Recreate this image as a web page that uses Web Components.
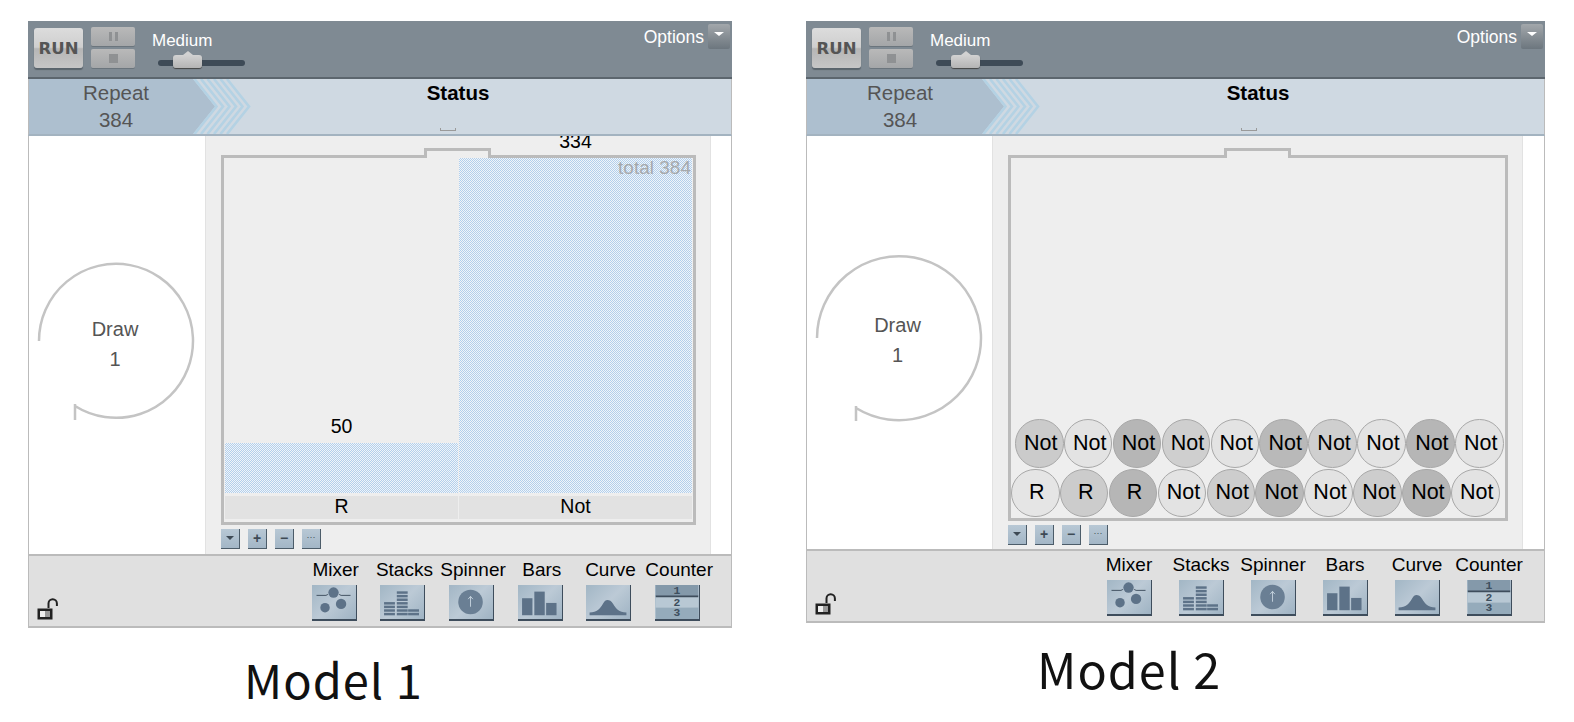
<!doctype html>
<html>
<head>
<meta charset="utf-8">
<title>Sampler models</title>
<style>
  html, body { margin: 0; background: #fff; }
  body { width: 1574px; height: 722px; overflow: hidden; font-family: "Liberation Sans", Arial, sans-serif; }
  .page { display: flex; padding: 21px 0 0 28px; gap: 74px; align-items: flex-start; }
</style>
</head>
<body>
<div class="page">
  <model-figure caption="Model 1" style="--panel-w:704px; --panel-h:607px; --side-w:176px; --canvas-w:506px; --cap-top:27px; --cap-left:216px; --cap-size:47px; --canvas-foot:5px; --label-shift:3px;">
    <sim-toolbar slot="toolbar"></sim-toolbar>
    <repeat-band slot="band" status-at="429px" tick-at="419px" chevron-left="164"></repeat-band>
    <draw-ring slot="side" size="160" cx="80" cy="80" r="77" tailx="39" taily="145" tailend="159" style="--ring-shift:-6px"></draw-ring>
    <sample-frame slot="canvas" tab-left="200px" total="total 384">
      <bar-stack>
        <bar-column count="50" label="R" height="50"></bar-column>
        <bar-column count="334" label="Not" height="335"></bar-column>
      </bar-stack>
    </sample-frame>
    <sample-buttons slot="canvas"></sample-buttons>
    <device-bar slot="devices" style="--cell:68.7px"></device-bar>
  </model-figure>

  <model-figure caption="Model 2" style="--panel-w:739px; --panel-h:602px; --side-w:185px; --canvas-w:531px; --cap-top:21px; --cap-left:231px; --cap-size:48.500px;">
    <sim-toolbar slot="toolbar"></sim-toolbar>
    <repeat-band slot="band" status-at="451px" tick-at="442px" chevron-left="175" repeat-left="43px"></repeat-band>
    <draw-ring slot="side" size="170" cx="85" cy="85" r="82" tailx="42" taily="155" tailend="168" style="--ring-shift:-8px"></draw-ring>
    <sample-frame slot="canvas" tab-left="213px">
      <ball-row style="--row-inset:4px">
        <sample-ball tone="#cbcbcb">Not</sample-ball><sample-ball tone="#e3e3e3">Not</sample-ball><sample-ball tone="#b6b6b6">Not</sample-ball><sample-ball tone="#cfcfcf">Not</sample-ball><sample-ball tone="#e3e3e3">Not</sample-ball><sample-ball tone="#b9b9b9">Not</sample-ball><sample-ball tone="#cfcfcf">Not</sample-ball><sample-ball tone="#e3e3e3">Not</sample-ball><sample-ball tone="#b6b6b6">Not</sample-ball><sample-ball tone="#e3e3e3">Not</sample-ball>
      </ball-row>
      <ball-row>
        <sample-ball tone="#e5e5e5">R</sample-ball><sample-ball tone="#cccccc">R</sample-ball><sample-ball tone="#b6b6b6">R</sample-ball><sample-ball tone="#e3e3e3">Not</sample-ball><sample-ball tone="#cdcdcd">Not</sample-ball><sample-ball tone="#b9b9b9">Not</sample-ball><sample-ball tone="#e3e3e3">Not</sample-ball><sample-ball tone="#cdcdcd">Not</sample-ball><sample-ball tone="#b6b6b6">Not</sample-ball><sample-ball tone="#e3e3e3">Not</sample-ball>
      </ball-row>
    </sample-frame>
    <sample-buttons slot="canvas"></sample-buttons>
    <device-bar slot="devices" style="--cell:72px"></device-bar>
  </model-figure>
</div>

<script>
function defineEl(name, html, extra) {
  const tpl = document.createElement("template");
  tpl.innerHTML = html;
  class El extends HTMLElement {
    constructor() {
      super();
      this.attachShadow({ mode: "open" });
      this.shadowRoot.appendChild(tpl.content.cloneNode(true));
    }
    connectedCallback() {
      if (extra) extra(this, this.shadowRoot);
    }
  }
  customElements.define(name, El);
}

defineEl("model-figure", `
  <style>
    :host { display: block; width: var(--panel-w); }
    .panel { width: var(--panel-w); height: var(--panel-h); display: flex; flex-direction: column; box-sizing: border-box; }
    .main { flex: 1; min-height: 0; display: flex; border-left: 1px solid #bbb; border-right: 1px solid #bbb; background: #fff; }
    .side { width: var(--side-w); display: flex; align-items: center; justify-content: center; }
    .canvas { width: var(--canvas-w); box-sizing: border-box; background: #eee; border-left: 1px solid #e2e2e2; border-right: 1px solid #e2e2e2; padding: 19px 14px var(--canvas-foot, 4px) 15px; display: flex; flex-direction: column; overflow: hidden; }
    .cap { margin: var(--cap-top) 0 0 var(--cap-left); font: 400 var(--cap-size)/1 "Noto Sans CJK KR", "Noto Sans", sans-serif; color: #111; letter-spacing: 1px; white-space: nowrap; }
  </style>
  <div class="panel">
    <slot name="toolbar"></slot>
    <slot name="band"></slot>
    <div class="main">
      <div class="side"><slot name="side"></slot></div>
      <div class="canvas"><slot name="canvas"></slot></div>
    </div>
    <slot name="devices"></slot>
  </div>
  <div class="cap"></div>
`, (el, root) => {
  root.querySelector(".cap").textContent = el.getAttribute("caption");
});

defineEl("sim-toolbar", `
  <style>
    :host { display: flex; height: 58px; flex: none; box-sizing: border-box; background: #7f8a93; border-bottom: 2px solid #5c666e; padding: 7px 2px 0 6px; color: #fff; font-family: "Liberation Sans", Arial, sans-serif; }
    .run { width: 49px; height: 40px; box-sizing: border-box; border-radius: 3px; background: linear-gradient(#dcdcdc 0, #cfcfcf 48%, #b6b6b6 52%, #c6c6c6 100%); box-shadow: 0 2px 1px #5a646c; font: 700 16.500px/41px "DejaVu Sans", sans-serif; color: #555; text-align: center; }
    .pair { margin-left: 8px; display: flex; flex-direction: column; gap: 3px; margin-top: -1px; }
    .pair div { width: 44px; height: 19px; border-radius: 2px; background: linear-gradient(#b9b9b9, #a4a6a8); display: flex; align-items: center; justify-content: center; gap: 3px; box-shadow: 0 1px 0 #6b757d; }
    .pause { width: 3px; height: 9px; background: #8f9193; }
    .stop { width: 9px; height: 9px; background: #8f9193; }
    .speed { margin-left: 17px; width: 120px; display: flex; flex-direction: column; }
    .speed span { font-size: 17px; line-height: 20px; margin-top: 3px; }
    .track { position: relative; margin: 9px 0 0 6px; width: 87px; height: 6px; border-radius: 3px; background: #3e4b57; }
    .thumb { position: absolute; left: 15px; top: -5px; width: 29px; height: 13px; border-radius: 3px; background: linear-gradient(#d2d2d2, #b4b4b4); box-shadow: 0 1px 1px #444; }
    .thumb::before { content: ""; position: absolute; left: 10px; top: -4px; border: 5px solid transparent; border-top: 0; border-bottom: 4px solid #d2d2d2; }
    .opts { margin-left: auto; display: flex; gap: 4px; align-items: flex-start; margin-top: -4px; }
    .opts span { font-size: 17.500px; line-height: 24px; margin-top: 1px; }
    .menu { width: 22px; height: 25px; border-radius: 2px; background: linear-gradient(#a2a7ab, #6c767e); position: relative; }
    .menu::after { content: ""; position: absolute; left: 6px; top: 8px; border: 5px solid transparent; border-bottom: 0; border-top: 4px solid #fff; }
  </style>
  <div class="run">RUN</div>
  <div class="pair">
    <div><i class="pause"></i><i class="pause"></i></div>
    <div><i class="stop"></i></div>
  </div>
  <div class="speed">
    <span>Medium</span>
    <div class="track"><div class="thumb"></div></div>
  </div>
  <div class="opts"><span>Options</span><div class="menu"></div></div>
`);

defineEl("repeat-band", `
  <style>
    :host { display: block; flex: none; height: 57px; box-sizing: border-box; position: relative; background: #cfd9e2; border-bottom: 2px solid #a3b3c0; border-left: 1px solid #bbb; border-right: 1px solid #bbb; font-family: "Liberation Sans", Arial, sans-serif; }
    .chev { position: absolute; left: 0; top: 0; width: 260px; height: 55px; }
    .rep { position: absolute; left: 37px; width: 100px; top: 0; text-align: center; font-size: 20.500px; line-height: 27px; color: #555; }
    .status { position: absolute; top: 0; transform: translateX(-50%); font-size: 20.500px; font-weight: 700; line-height: 27px; color: #000; }
    .tick { position: absolute; bottom: 3px; width: 16px; height: 3px; border: 1px solid #9a9a9a; border-top: 0; box-sizing: border-box; transform: translateX(-50%); }
  </style>
  <svg class="chev" viewBox="0 0 260 55">
    <polygon class="fill" fill="#adbfcf"/>
    <g class="stripes" fill="none" stroke="#b4d2e4" stroke-width="2.600"></g>
  </svg>
  <div class="rep">Repeat<br>384</div>
  <div class="status">Status</div>
  <div class="tick"></div>
`, (el, root) => {
  const shift = parseFloat(el.getAttribute("chevron-left"));
  root.querySelector(".fill").setAttribute("points", `0,0 ${shift},0 ${shift + 22},27.5 ${shift},55 0,55`);
  let lines = "";
  for (let i = 0; i < 6; i++) {
    const x = shift + 1.5 + i * 6.5;
    lines += `<polyline points="${x},0 ${x + 22},27.5 ${x},55"/>`;
  }
  root.querySelector(".stripes").innerHTML = lines;
  if (el.hasAttribute("repeat-left")) {
    root.querySelector(".rep").style.left = el.getAttribute("repeat-left");
  }
  root.querySelector(".status").style.left = el.getAttribute("status-at");
  root.querySelector(".tick").style.left = el.getAttribute("tick-at");
});

defineEl("draw-ring", `
  <style>
    :host { display: block; position: relative; margin-top: var(--ring-shift, 0); margin-left: -2px; font-family: "Liberation Sans", Arial, sans-serif; color: #555; }
    svg { display: block; }
    .txt { position: absolute; inset: 0 2px 0 0; display: flex; flex-direction: column; align-items: center; justify-content: center; font-size: 20px; line-height: 30px; padding-top: 3px; }
  </style>
  <svg><path fill="none" stroke="#c4c4c4" stroke-width="2.500"/></svg>
  <div class="txt"><span>Draw</span><span>1</span></div>
`, (el, root) => {
  const s = +el.getAttribute("size"), cx = +el.getAttribute("cx"), cy = +el.getAttribute("cy"), r = +el.getAttribute("r");
  const tx = +el.getAttribute("tailx"), ty = +el.getAttribute("taily"), te = +el.getAttribute("tailend");
  const svg = root.querySelector("svg");
  svg.setAttribute("width", s);
  svg.setAttribute("height", s + 2);
  root.querySelector("path").setAttribute("d", `M${cx - r} ${cy} A${r} ${r} 0 1 1 ${tx} ${ty} M${tx} ${ty - 2} V${te}`);
});

defineEl("sample-frame", `
  <style>
    :host { display: block; flex: 1; min-height: 0; position: relative; box-sizing: border-box; border: 3px solid #bbb; background: #eee; }
    .inner { height: 100%; display: flex; flex-direction: column; justify-content: flex-end; position: relative; }
    .tab { position: absolute; top: -10px; height: 10px; width: 67px; box-sizing: border-box; border: 3px solid #bbb; border-bottom: 0; background: #eee; }
    .tab::after { content: ""; position: absolute; left: 0; right: 0; bottom: -3px; height: 3px; background: #eee; }
    .total { position: absolute; right: 2px; top: -1px; font-size: 19px; line-height: 22px; color: #a6a9ac; z-index: 1; }
  </style>
  <div class="tab"></div>
  <div class="inner"><slot></slot></div>
  <div class="total"></div>
`, (el, root) => {
  root.querySelector(".tab").style.left = el.getAttribute("tab-left");
  const total = root.querySelector(".total");
  if (el.hasAttribute("total")) total.textContent = el.getAttribute("total");
  else total.remove();
});

defineEl("sample-buttons", `
  <style>
    :host { display: flex; gap: 8px; flex: none; height: 20px; margin-top: 4px; }
    div { width: 19px; height: 20px; box-sizing: border-box; background: linear-gradient(#b8c8d5, #a3b6c6); border-right: 1px solid #4c5c69; border-bottom: 1px solid #4c5c69; color: #3e4a55; font: 700 14px/19px "Liberation Sans", sans-serif; text-align: center; }
    .dn::after { content: ""; display: inline-block; border: 4px solid transparent; border-bottom: 0; border-top: 4px solid #3e4a55; vertical-align: middle; margin-top: -2px; }
    .more { font-size: 9px; line-height: 17px; font-weight: 400; }
  </style>
  <div class="dn"></div><div>+</div><div>&minus;</div><div class="more">&middot;&middot;&middot;</div>
`);

defineEl("bar-stack", `
  <style>
    :host { display: flex; align-items: flex-end; height: 100%; gap: 1px; padding: 0 1px; box-sizing: border-box; }
  </style>
  <slot></slot>
`);

defineEl("bar-column", `
  <style>
    :host { display: flex; flex-direction: column; flex: 1; min-width: 0; text-align: center; font-family: "Liberation Sans", Arial, sans-serif; color: #000; }
    .count { font-size: 19.500px; line-height: 22px; margin-bottom: 6px; }
    .bar { background-image: repeating-conic-gradient(#b3cfeb 0 25%, #f0f5fa 0 50%); background-size: 2px 2px; }
    .lab { margin-top: 3px; height: 23px; margin-bottom: 3px; background: #e2e2e2; font-size: 19.500px; line-height: 21px; }
  </style>
  <div class="count"></div>
  <div class="bar"></div>
  <div class="lab"></div>
`, (el, root) => {
  root.querySelector(".count").textContent = el.getAttribute("count");
  root.querySelector(".lab").textContent = el.getAttribute("label");
  root.querySelector(".bar").style.height = el.getAttribute("height") + "px";
});

defineEl("ball-row", `
  <style>
    :host { display: flex; flex: none; padding-left: var(--row-inset, 0); }
  </style>
  <slot></slot>
`);

defineEl("sample-ball", `
  <style>
    :host { display: block; flex: 0 0 48.900px; height: 49.500px; font-family: "Liberation Sans", Arial, sans-serif; }
    div { width: 48.500px; height: 48.500px; box-sizing: border-box; border-radius: 50%; border: 1.500px solid #a8a8a8; display: flex; align-items: center; justify-content: center; font-size: 21.500px; color: #000; padding-left: 3px; }
  </style>
  <div><slot></slot></div>
`, (el, root) => {
  root.querySelector("div").style.background = el.getAttribute("tone");
});

function stackRows() {
  let s = "";
  [[3.5, 4, 11.5], [17, 7, 11.5], [29, 2, 11.5]].forEach(([x, n, w]) => {
    for (let i = 0; i < n; i++) s += `<rect x="${x}" y="${29.5 - i * 3.8}" width="${w}" height="2.600" fill="#5d7288"/>`;
  });
  return s;
}

const digitAttrs = `x="22.500" font-family="Liberation Mono, monospace" font-size="12" font-weight="700" text-anchor="middle" fill="#3e4f5f"`;
const deviceGlyphs = {
  Mixer: `<path d="M4 11h10l2-1M28 10l2 1h10" stroke="#3e4d5c" stroke-width="1" fill="none"/><circle cx="22" cy="8" r="5.500" fill="#5d7288"/><circle cx="13" cy="24" r="5" fill="#5d7288"/><circle cx="30" cy="20" r="5.500" fill="#5d7288"/>`,
  Stacks: stackRows(),
  Spinner: `<circle cx="22" cy="18" r="13" fill="#6a7f94"/><path d="M22 23V12M19.500 15l2.500-3 2.500 3" stroke="#c4d2dd" stroke-width="1" fill="none"/>`,
  Bars: `<rect x="3.500" y="14" width="11" height="18" fill="#5d7288"/><rect x="16.500" y="7" width="11" height="25" fill="#5d7288"/><rect x="29" y="19" width="11" height="13" fill="#5d7288"/>`,
  Curve: `<path d="M3 32V29C11 29 14 25 17 20C19 17 20 16 22 16C24 16 26 17 28 20C31 25 34 29 42 29V32Z" fill="#5d7288"/>`,
  Counter: `<rect y="0" width="45" height="12" fill="#8499aa"/><rect y="12" width="45" height="12" fill="#b8c8d4"/><rect y="24" width="45" height="12" fill="#95abbb"/><path d="M0 12H45" stroke="#3e4d5c" stroke-width="2"/><text ${digitAttrs} y="10">1</text><text ${digitAttrs} y="22.500">2</text><text ${digitAttrs} y="33">3</text>`
};

defineEl("device-icon", `
  <style>
    :host { display: flex; flex-direction: column; align-items: center; flex: 0 0 var(--cell); min-width: 0; width: var(--cell); font-family: "Liberation Sans", Arial, sans-serif; }
    span { font-size: 19px; line-height: 22px; color: #000; white-space: nowrap; padding-left: var(--label-shift, 0); }
    svg { display: block; width: 45px; height: 36px; margin-top: 4px; box-sizing: border-box; border-right: 1px solid #3e4d5c; border-bottom: 2px solid #3e4d5c; background: linear-gradient(135deg, #a2b6c5, #bccad6 50%, #9fb3c3); }
  </style>
  <span></span>
  <svg viewBox="0 0 45 36"></svg>
`, (el, root) => {
  const n = el.getAttribute("name");
  root.querySelector("span").textContent = n;
  root.querySelector("svg").innerHTML = deviceGlyphs[n];
});

defineEl("device-bar", `
  <style>
    :host { display: flex; flex: none; height: 74px; box-sizing: border-box; background: #e0e0e0; border: 1px solid #bbb; border-top-width: 2px; border-bottom-width: 2px; padding: 3px 19px 0 8px; align-items: flex-start; }
    svg { margin-top: 39px; flex: none; }
    .gap { flex: 1; }
    .row { display: flex; }
  </style>
  <svg width="22" height="22" viewBox="0 0 22 22">
    <rect x="0.500" y="10.500" width="15" height="11" fill="#222"/>
    <rect x="3" y="13" width="5" height="6" fill="#eee"/>
    <rect x="8" y="13" width="5" height="6" fill="#999"/>
    <path d="M11.500 10V5.500a4.200 4.200 0 0 1 8.400 0V8" fill="none" stroke="#222" stroke-width="2"/>
  </svg>
  <div class="gap"></div>
  <div class="row">
    <device-icon name="Mixer"></device-icon>
    <device-icon name="Stacks"></device-icon>
    <device-icon name="Spinner"></device-icon>
    <device-icon name="Bars"></device-icon>
    <device-icon name="Curve"></device-icon>
    <device-icon name="Counter"></device-icon>
  </div>
`);
</script>
</body>
</html>
